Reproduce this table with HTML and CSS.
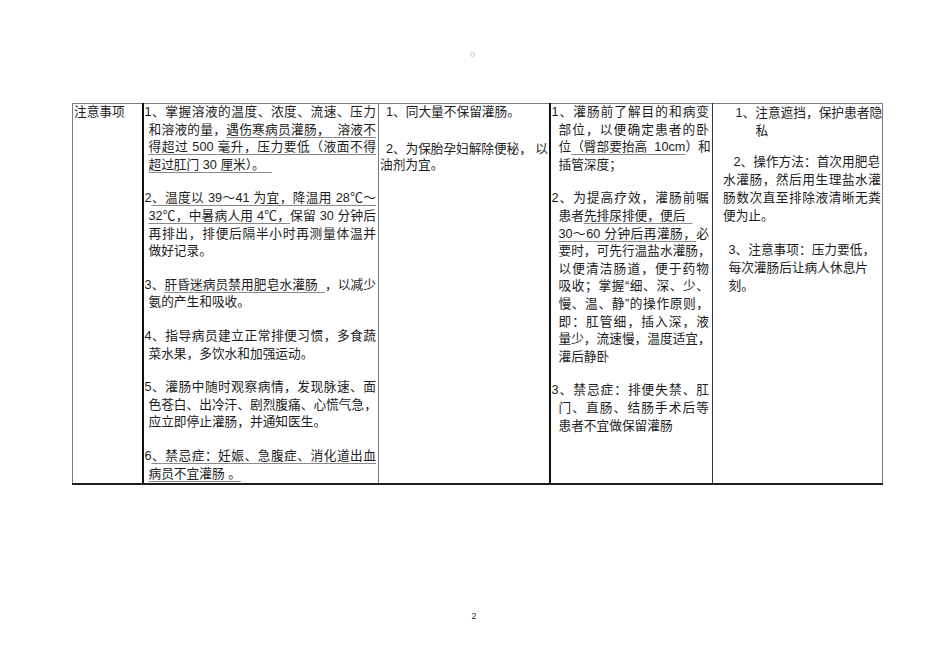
FILE: index.html
```html
<!DOCTYPE html>
<html lang="zh-CN">
<head>
<meta charset="utf-8">
<title>注意事项</title>
<link rel="stylesheet" href="styles.css">
</head>
<body>
<div class="page">
  <div class="mark"><span class="ring"></span></div>
  <table class="notes">
    <colgroup>
      <col class="w1"><col class="w2"><col class="w3"><col class="w4"><col class="w5">
    </colgroup>
    <tr>
      <td class="c1">注意事项</td>
      <td class="c2">
        <div class="p">
          <span class="l j first">1、掌握溶液的温度、浓度、流速、压力</span>
          <span class="l j">和溶液的量，<span class="u">遇伤寒病员灌肠，&nbsp;&nbsp;溶液不</span></span>
          <span class="l j"><span class="u">得超过 500 毫升，压力要低（液面不得</span></span>
          <span class="l"><span class="u">超过肛门 30 厘米）。&nbsp;&nbsp;</span></span>
        </div>
        <div class="p">
          <span class="l j first">2<span class="u">、温度以 39～41 为宜，降温用 28℃～</span></span>
          <span class="l j"><span class="u">32℃，中暑病人用 4℃，</span>保留 30 分钟后</span>
          <span class="l j">再排出，排便后隔半小时再测量体温并</span>
          <span class="l">做好记录。</span>
        </div>
        <div class="p">
          <span class="l j first">3、<span class="u">肝昏迷病员禁用肥皂水灌肠&nbsp;&nbsp;</span>，以减少</span>
          <span class="l">氨的产生和吸收。</span>
        </div>
        <div class="p">
          <span class="l j first">4、指导病员建立正常排便习惯，多食蔬</span>
          <span class="l">菜水果，多饮水和加强运动。</span>
        </div>
        <div class="p">
          <span class="l j first">5、灌肠中随时观察病情，发现脉速、面</span>
          <span class="l j">色苍白、出冷汗、剧烈腹痛、心慌气急，</span>
          <span class="l">应立即停止灌肠，并通知医生。</span>
        </div>
        <div class="p">
          <span class="l j first">6<span class="u">、禁忌症：妊娠、急腹症、消化道出血</span></span>
          <span class="l"><span class="u">病员不宜灌肠 。</span></span>
        </div>
      </td>
      <td class="c3">
        <div class="p p1">
          <span class="l first">1、同大量不保留灌肠。</span>
        </div>
        <div class="p p2">
          <span class="l j first tight">2、为保胎孕妇解除便秘， 以</span>
          <span class="l">油剂为宜。</span>
        </div>
      </td>
      <td class="c4">
        <div class="p">
          <span class="l j first">1、灌肠前了解目的和病变</span>
          <span class="l j">部位，以便确定患者的卧</span>
          <span class="l j">位<span class="u">（臀部要抬高&nbsp;&nbsp;10cm</span>）和</span>
          <span class="l">插管深度；</span>
        </div>
        <div class="p">
          <span class="l j first">2、为提高疗效，灌肠前嘱</span>
          <span class="l">患者<span class="u">先排尿排便，便后&nbsp;&nbsp;</span></span>
          <span class="l j"><span class="u">30～60 分钟后再灌肠，</span>必</span>
          <span class="l j">要时，可先行温盐水灌肠，</span>
          <span class="l j">以便清洁肠道，便于药物</span>
          <span class="l j">吸收；掌握“细、深、少、</span>
          <span class="l j">慢、温、静”的操作原则，</span>
          <span class="l j">即：肛管细，插入深，液</span>
          <span class="l j">量少，流速慢，温度适宜，</span>
          <span class="l">灌后静卧</span>
        </div>
        <div class="p">
          <span class="l j first">3、禁忌症：排便失禁、肛</span>
          <span class="l j">门、直肠、结肠手术后等</span>
          <span class="l">患者不宜做保留灌肠</span>
        </div>
      </td>
      <td class="c5">
        <div class="p p1">
          <span class="l i1">1、注意遮挡，保护患者隐</span>
          <span class="l i2">私</span>
        </div>
        <div class="p p2">
          <span class="l i3">2、操作方法：首次用肥皂</span>
          <span class="l j">水灌肠，然后用生理盐水灌</span>
          <span class="l j">肠数次直至排除液清晰无粪</span>
          <span class="l">便为止。</span>
        </div>
        <div class="p p3">
          <span class="l">3、注意事项：压力要低，</span>
          <span class="l">每次灌肠后让病人休息片</span>
          <span class="l">刻。</span>
        </div>
      </td>
    </tr>
  </table>
  <div class="pageno">2</div>
</div>
</body>
</html>
```

FILE: styles.css
```css
html, body {
  margin: 0;
  padding: 0;
  background: #ffffff;
}

body {
  font-family: "Liberation Sans", "Noto Sans CJK SC", sans-serif;
  color: #1c1c1c;
}

.page {
  width: 950px;
  height: 672px;
  overflow: hidden;
}

.mark {
  height: 103px;
  box-sizing: border-box;
  padding-top: 52px;
  padding-right: 6px;
  display: flex;
  justify-content: center;
  align-items: flex-start;
}

.ring {
  width: 3px;
  height: 3px;
  border: 1px solid #c8c8c8;
  border-radius: 50%;
}

.notes {
  margin-left: 72px;
  width: 810px;
  table-layout: fixed;
  border-collapse: collapse;
  font-size: 12.7px;
  line-height: 17.6px;
}

.w1 { width: 70px; }
.w2 { width: 236px; }
.w3 { width: 171px; }
.w4 { width: 163px; }
.w5 { width: 170px; }

.notes td {
  vertical-align: top;
  padding: 0;
  height: 375px;
  border-top: 1px solid #7a7a7a;
  border-bottom: 2px solid #1e1e1e;
}

.c1 {
  border-left: 1px solid #7a7a7a;
  border-right: 2px solid #111111;
  padding-left: 1px !important;
}

.c2 {
  border-right: 1px solid #7a7a7a;
  padding-left: 5px !important;
  padding-right: 2px !important;
}

.c3 {
  border-right: 2px solid #111111;
  padding-left: 1px !important;
  padding-right: 1px !important;
}

.c4 {
  border-right: 1px solid #333333;
  padding-left: 8px !important;
  padding-right: 3px !important;
}

.c5 {
  border-right: 1px solid #7a7a7a;
  padding-left: 10px !important;
  padding-right: 1px !important;
  line-height: 18px;
}

.l {
  display: block;
  white-space: nowrap;
}

.j {
  text-align: justify;
  text-align-last: justify;
}

.tight {
  letter-spacing: -0.4px;
}

.u {
  text-decoration: underline;
  text-decoration-color: #8a8a8a;
  text-decoration-thickness: 1px;
  text-underline-offset: 3px;
}

.c2 .first { margin-left: -4px; }
.c4 .first { margin-left: -7px; }
.c3 .first { padding-left: 6px; }

.c2 .p + .p,
.c4 .p + .p {
  margin-top: 16px;
}

.c3 .p2 {
  margin-top: 20.6px;
  line-height: 15.5px;
}

.c5 .i1 { padding-left: 12.5px; }
.c5 .i2 { padding-left: 32.5px; }
.c5 .i3 { padding-left: 10.5px; }
.c5 .p2 { margin-top: 12.7px; }
.c5 .p3 { margin-top: 16.3px; padding-left: 5.5px; }

.pageno {
  margin-top: 126px;
  padding-right: 2px;
  text-align: center;
  font-size: 9px;
  line-height: 10px;
  color: #333333;
}
```
